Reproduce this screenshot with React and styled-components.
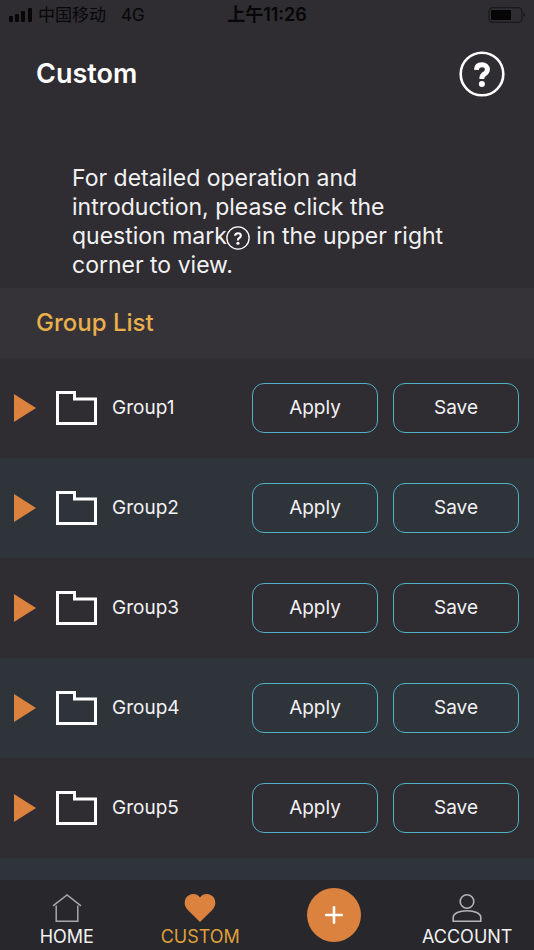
import React, { useState } from "react";
import styled, { createGlobalStyle } from "styled-components";

const GlobalStyle = createGlobalStyle`
  * {
    box-sizing: border-box;
  }
  body {
    margin: 0;
    background: #2f2c32;
    color: #f2f2f2;
    font-family: Inter, "Noto Sans CJK SC", sans-serif;
  }
  button {
    font-family: inherit;
    cursor: pointer;
  }
`;

const Screen = styled.div`
  display: flex;
  flex-direction: column;
  height: 100vh;
  overflow: hidden;
`;

const StatusBar = styled.div`
  display: grid;
  grid-template-columns: 1fr auto 1fr;
  align-items: center;
  height: 30px;
  padding: 0 8px;
  color: #070708;
  font-size: 17px;
  line-height: 20px;
`;

const Carrier = styled.div`
  display: flex;
  align-items: center;
  gap: 6px;
`;

const Network = styled.span`
  margin-left: 9px;
`;

const Clock = styled.time`
  font-size: 18px;
  font-weight: 600;
`;

const BatterySlot = styled.div`
  display: flex;
  justify-content: flex-end;
`;

const Header = styled.header`
  display: flex;
  align-items: center;
  justify-content: space-between;
  height: 88px;
  padding: 0 29px 0 36px;
`;

const Title = styled.h1`
  margin: 0;
  color: #ffffff;
  font-size: 27px;
  font-weight: 600;
  line-height: 32px;
`;

const HelpButton = styled.button`
  display: flex;
  padding: 0;
  border: 0;
  background: none;
`;

const Intro = styled.p`
  margin: 0;
  padding: 46px 72px 8px;
  font-size: 23px;
  line-height: 29px;

  svg {
    margin-left: -1px;
    vertical-align: -6px;
  }
`;

const ListTitle = styled.h2`
  margin: 0;
  padding: 20px 36px;
  background: #353337;
  color: #ebb04c;
  font-size: 24px;
  font-weight: 500;
  line-height: 30px;
`;

const List = styled.ul`
  display: flex;
  flex: 1;
  flex-direction: column;
  min-height: 0;
  margin: 0;
  padding: 0;
  overflow: hidden;
  background: #2f343a;
  list-style: none;
`;

const Row = styled.li`
  display: flex;
  flex-shrink: 0;
  align-items: center;
  height: 100px;
  padding: 0 15px 0 14px;
  background: ${(props) => (props.$odd ? "#2f343a" : "#2f2c32")};
`;

const ExpandButton = styled.button`
  display: flex;
  margin-right: 20px;
  padding: 0;
  border: 0;
  background: none;
`;

const GroupName = styled.span`
  flex: 1;
  margin-left: 15px;
  font-size: 19px;
  line-height: 24px;
`;

const Actions = styled.div`
  display: flex;
  gap: 15px;
`;

const ActionButton = styled.button`
  width: 126px;
  height: 50px;
  padding: 0;
  border: 1px solid #4fb0c6;
  border-radius: 12px;
  background: transparent;
  color: #f2f2f2;
  font-size: 19px;
  line-height: 24px;
`;

const TabBar = styled.nav`
  display: grid;
  flex-shrink: 0;
  grid-template-columns: repeat(4, 1fr);
  height: 70px;
  background: #28272b;
`;

const Tab = styled.a`
  display: flex;
  flex-direction: column;
  align-items: center;
  gap: 2px;
  padding-top: 13px;
  color: ${(props) => (props.$active ? "#dfa03c" : "#f2f2f2")};
  font-size: 18px;
  line-height: 24px;
  text-decoration: none;
`;

const AddButton = styled.button`
  display: flex;
  align-items: center;
  justify-content: center;
  align-self: center;
  justify-self: center;
  width: 54px;
  height: 54px;
  padding: 0;
  border: 0;
  border-radius: 50%;
  background: #da823e;
`;

const SignalIcon = () => (
  <svg width="24" height="16" viewBox="0 0 24 16" fill="#070708" aria-hidden="true">
    <rect x="1" y="9" width="4" height="6" rx="1" />
    <rect x="7" y="7" width="4" height="8" rx="1" />
    <rect x="13" y="4" width="4" height="11" rx="1" />
    <rect x="20" y="1" width="4" height="14" rx="1" />
  </svg>
);

const BatteryIcon = () => (
  <svg width="38" height="16" viewBox="0 0 38 16" aria-hidden="true">
    <rect x="1" y="0.6" width="33" height="14.8" rx="4" fill="none" stroke="#1a191c" strokeWidth="1.2" />
    <rect x="3" y="3" width="20" height="10" rx="1" fill="#050505" />
    <path d="M35.5 5.5c2 .6 2 4.4 0 5z" fill="#1a191c" />
  </svg>
);

const QuestionIcon = ({ size, stroke, mark }) => (
  <svg width={size} height={size} viewBox="0 0 46 46" fill="none" stroke="#ffffff" aria-hidden="true">
    <circle cx="23" cy="23" r={23 - stroke / 2 - 0.4} strokeWidth={stroke} />
    <path d="M17.4 18.8c.2-3.200 2.400-5 5.600-5 3.200 0 5.400 1.800 5.400 4.700 0 2.100-1 3.200-2.800 4.400-1.900 1.200-2.700 2.200-2.700 4.200v.9" strokeWidth={mark} />
    <circle cx="22.9" cy="33" r="3" fill="#ffffff" stroke="none" />
  </svg>
);

const TriangleIcon = () => (
  <svg width="22" height="28" viewBox="0 0 22 28" aria-hidden="true">
    <path d="M0 0L22 14L0 28z" fill="#da823e" />
  </svg>
);

const FolderIcon = () => (
  <svg width="41" height="34" viewBox="0 0 41 34" fill="none" aria-hidden="true">
    <path d="M1.5 1.5H18.5V8H39.5V32.5H1.5z" stroke="#ffffff" strokeWidth="3" />
  </svg>
);

const HomeIcon = () => (
  <svg width="30" height="30" viewBox="0 0 30 30" fill="none" stroke="#a9a8aa" strokeWidth="1.5" aria-hidden="true">
    <path d="M1 12.8L15 2L29 12.8" />
    <path d="M4.2 12.5V28.2H25.8V12.5" />
  </svg>
);

const HeartIcon = () => (
  <svg width="32" height="30" viewBox="0 0 32 30" fill="#da823e" aria-hidden="true">
    <path d="M16 29L3.3 16.4C-1 11.8.3 4.6 4.9 2.2C9 0 13.6 1.1 16 4.4C18.4 1.1 23 0 27.1 2.2C31.7 4.6 33 11.8 28.7 16.4z" />
  </svg>
);

const AccountIcon = () => (
  <svg width="30" height="30" viewBox="0 0 30 30" fill="none" stroke="#b5b4b6" strokeWidth="1.6" aria-hidden="true">
    <circle cx="15" cy="8.5" r="6.8" />
    <path d="M1.2 28.2V24.5C1.2 20.2 7.5 17.8 15 17.8S28.8 20.2 28.8 24.5V28.2z" />
  </svg>
);

const PlusIcon = () => (
  <svg width="18" height="18" viewBox="0 0 18 18" stroke="#ffffff" strokeWidth="2.6" strokeLinecap="round" aria-hidden="true">
    <path d="M9 1.3V16.7M1.3 9H16.7" />
  </svg>
);

const groups = ["Group1", "Group2", "Group3", "Group4", "Group5"];

const tabs = [
  { name: "HOME", href: "#home", icon: HomeIcon },
  { name: "CUSTOM", href: "#custom", icon: HeartIcon },
  { name: "ACCOUNT", href: "#account", icon: AccountIcon },
];

const TabLink = ({ tab, current, onSelect }) => {
  const Icon = tab.icon;
  return (
    <Tab href={tab.href} $active={current === tab.name} onClick={() => onSelect(tab.name)}>
      <Icon />
      {tab.name}
    </Tab>
  );
};

export default function App() {
  const [current, setCurrent] = useState("CUSTOM");

  return (
    <Screen>
      <GlobalStyle />
      <StatusBar>
        <Carrier>
          <SignalIcon />
          <span>中国移动</span>
          <Network>4G</Network>
        </Carrier>
        <Clock>上午11:26</Clock>
        <BatterySlot>
          <BatteryIcon />
        </BatterySlot>
      </StatusBar>
      <Header>
        <Title>Custom</Title>
        <HelpButton type="button" aria-label="Help">
          <QuestionIcon size={46} stroke={2.6} mark={5} />
        </HelpButton>
      </Header>
      <Intro>
        For detailed operation and introduction, please click the question mark
        <QuestionIcon size={24} stroke={2.6} mark={4} /> in the upper right corner to view.
      </Intro>
      <ListTitle>Group List</ListTitle>
      <List>
        {groups.map((name, index) => (
          <Row key={name} $odd={index % 2 === 1}>
            <ExpandButton type="button" aria-label={`Expand ${name}`}>
              <TriangleIcon />
            </ExpandButton>
            <FolderIcon />
            <GroupName>{name}</GroupName>
            <Actions>
              <ActionButton type="button">Apply</ActionButton>
              <ActionButton type="button">Save</ActionButton>
            </Actions>
          </Row>
        ))}
      </List>
      <TabBar>
        <TabLink tab={tabs[0]} current={current} onSelect={setCurrent} />
        <TabLink tab={tabs[1]} current={current} onSelect={setCurrent} />
        <AddButton type="button" aria-label="Add">
          <PlusIcon />
        </AddButton>
        <TabLink tab={tabs[2]} current={current} onSelect={setCurrent} />
      </TabBar>
    </Screen>
  );
}
